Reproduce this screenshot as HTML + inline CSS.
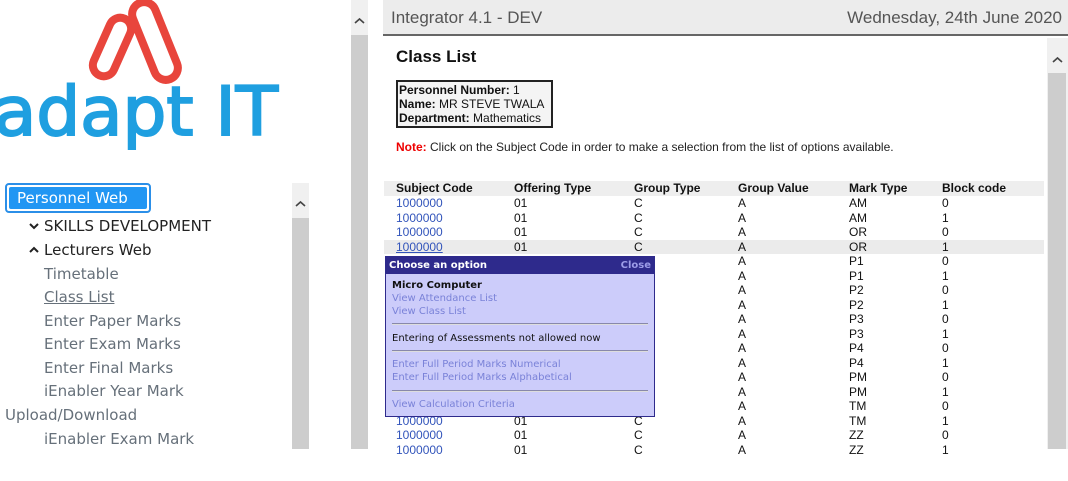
<!DOCTYPE html>
<html><head><meta charset="utf-8"><style>
*{margin:0;padding:0;box-sizing:border-box}
body{width:1068px;height:449px;overflow:hidden;background:#fff;position:relative;font-family:"Liberation Sans",Arial,sans-serif}
.a{position:absolute}
.side{font-family:"DejaVu Sans","Liberation Sans",sans-serif;font-size:15px;color:#66707a;white-space:nowrap}
.r{position:absolute;left:0;width:660px;height:14.5px;font-size:12px;line-height:14px;color:#111}
.r span{position:absolute}
.r .c0{left:12px;color:#3355bb}
.r .c1{left:130px}.r .c2{left:250px}.r .c3{left:354px}.r .c4{left:465px}.r .c5{left:558px}
.pm{font-family:"DejaVu Sans",Verdana,sans-serif;font-size:10px;position:absolute;left:7px;white-space:nowrap}
.lk{color:#7a82d8}
.hr{position:absolute;left:6px;width:256px;height:2px;background:#8888aa;border-bottom:1px solid #ddd}
</style></head><body>
<!-- logo -->
<svg class="a" style="left:0;top:0" width="300" height="150">
<rect x="101" y="16" width="22" height="62" rx="11" fill="none" stroke="#e8453c" stroke-width="8" transform="rotate(24 112 47)"/>
<rect x="143" y="0" width="24" height="82" rx="12" fill="none" stroke="#e8453c" stroke-width="8" transform="rotate(-22 155 41)"/>
<text x="-6" y="135" font-family="DejaVu Sans,sans-serif" font-size="68" fill="#1f9fe0" stroke="#1f9fe0" stroke-width="2" textLength="284" lengthAdjust="spacingAndGlyphs">adapt IT</text>
</svg>
<!-- sidebar -->
<div class="a" style="left:5px;top:183px;width:146px;height:30px;border:2px solid #2b8fe8;border-radius:4px;background:#fff"></div>
<div class="a" style="left:8px;top:186px;width:140px;height:24px;background:#2196f3;border:1px solid #fff;border-radius:3px;color:#fff;font-family:'DejaVu Sans',sans-serif;font-size:15px;line-height:22px;padding-left:8px">Personnel Web</div>
<svg class="a" style="left:29px;top:222px" width="10" height="8"><path d="M1 2 L5 6 L9 2" fill="none" stroke="#222" stroke-width="2"/></svg>
<svg class="a" style="left:29px;top:246px" width="10" height="8"><path d="M1 6 L5 2 L9 6" fill="none" stroke="#222" stroke-width="2"/></svg>
<div class="a side" style="left:44px;top:217px;color:#222">SKILLS DEVELOPMENT</div>
<div class="a side" style="left:44px;top:241px;color:#222">Lecturers Web</div>
<div class="a side" style="left:44px;top:265px">Timetable</div>
<div class="a side" style="left:44px;top:288px;text-decoration:underline">Class List</div>
<div class="a side" style="left:44px;top:312px">Enter Paper Marks</div>
<div class="a side" style="left:44px;top:335px">Enter Exam Marks</div>
<div class="a side" style="left:44px;top:359px">Enter Final Marks</div>
<div class="a side" style="left:44px;top:382px">iEnabler Year Mark</div>
<div class="a side" style="left:5px;top:406px">Upload/Download</div>
<div class="a side" style="left:44px;top:430px">iEnabler Exam Mark</div>
<!-- inner scrollbar -->
<div class="a" style="left:292px;top:183px;width:17px;height:266px;background:#f0f0f0"></div>
<div class="a" style="left:292px;top:218px;width:17px;height:231px;background:#cdcdcd"></div>
<svg class="a" style="left:295px;top:200px" width="11" height="8"><path d="M1 6 L5.5 2 L10 6" fill="none" stroke="#444" stroke-width="1.6"/></svg>
<!-- outer scrollbar -->
<div class="a" style="left:351px;top:0;width:17px;height:449px;background:#f0f0f0"></div>
<div class="a" style="left:351px;top:35px;width:17px;height:414px;background:#cdcdcd"></div>
<svg class="a" style="left:354px;top:17px" width="11" height="8"><path d="M1 6 L5.5 2 L10 6" fill="none" stroke="#444" stroke-width="1.6"/></svg>
<!-- header -->
<div class="a" style="left:383px;top:0;width:685px;height:36px;background:#ececec;border-bottom:2px solid #666"></div>
<div class="a" style="left:391px;top:8px;font-family:'Liberation Sans',sans-serif;font-size:17px;color:#555">Integrator 4.1 - DEV</div>
<div class="a" style="right:6px;top:8px;font-family:'Liberation Sans',sans-serif;font-size:17px;color:#555">Wednesday, 24th June 2020</div>
<!-- right scrollbar -->
<div class="a" style="left:1047px;top:38px;width:21px;height:411px;background:#f0f0f0"></div>
<div class="a" style="left:1048px;top:73px;width:18px;height:376px;background:#cdcdcd"></div>
<svg class="a" style="left:1052px;top:56px" width="11" height="8"><path d="M1 6 L5.5 2 L10 6" fill="none" stroke="#444" stroke-width="1.6"/></svg>
<!-- content -->
<div class="a" style="left:396px;top:47px;font-size:17px;font-weight:bold;color:#111">Class List</div>
<div class="a" style="left:396px;top:80px;border:2px solid #222;padding:1px 1px;font-size:12px;line-height:14px;color:#111;background:#f4f4f4;width:157px">
<b>Personnel Number:</b> 1<br><b>Name:</b> MR STEVE TWALA<br><b>Department:</b> Mathematics</div>
<div class="a" style="left:396px;top:140px;font-size:12px;color:#222"><b style="color:#e00">Note:</b> Click on the Subject Code in order to make a selection from the list of options available.</div>
<div class="a" style="left:384px;top:181px;width:660px;height:300px">
<div class="r" style="top:0;background:#eee;font-weight:bold;height:15px"><span class="c0" style="color:#111">Subject Code</span><span class="c1">Offering Type</span><span class="c2">Group Type</span><span class="c3">Group Value</span><span class="c4">Mark Type</span><span class="c5">Block code</span></div>
<div class="r" style="top:15px"><span class="c0">1000000</span><span class="c1">01</span><span class="c2">C</span><span class="c3">A</span><span class="c4">AM</span><span class="c5">0</span></div>
<div class="r" style="top:29.5px"><span class="c0">1000000</span><span class="c1">01</span><span class="c2">C</span><span class="c3">A</span><span class="c4">AM</span><span class="c5">1</span></div>
<div class="r" style="top:44px"><span class="c0">1000000</span><span class="c1">01</span><span class="c2">C</span><span class="c3">A</span><span class="c4">OR</span><span class="c5">0</span></div>
<div class="r" style="top:58.5px;background:#ebebeb"><span class="c0" style="text-decoration:underline">1000000</span><span class="c1">01</span><span class="c2">C</span><span class="c3">A</span><span class="c4">OR</span><span class="c5">1</span></div>
<div class="r" style="top:73px"><span class="c3">A</span><span class="c4">P1</span><span class="c5">0</span></div>
<div class="r" style="top:87.5px"><span class="c3">A</span><span class="c4">P1</span><span class="c5">1</span></div>
<div class="r" style="top:102px"><span class="c3">A</span><span class="c4">P2</span><span class="c5">0</span></div>
<div class="r" style="top:116.5px"><span class="c3">A</span><span class="c4">P2</span><span class="c5">1</span></div>
<div class="r" style="top:131px"><span class="c3">A</span><span class="c4">P3</span><span class="c5">0</span></div>
<div class="r" style="top:145.5px"><span class="c3">A</span><span class="c4">P3</span><span class="c5">1</span></div>
<div class="r" style="top:160px"><span class="c3">A</span><span class="c4">P4</span><span class="c5">0</span></div>
<div class="r" style="top:174.5px"><span class="c3">A</span><span class="c4">P4</span><span class="c5">1</span></div>
<div class="r" style="top:189px"><span class="c3">A</span><span class="c4">PM</span><span class="c5">0</span></div>
<div class="r" style="top:203.5px"><span class="c3">A</span><span class="c4">PM</span><span class="c5">1</span></div>
<div class="r" style="top:218px"><span class="c3">A</span><span class="c4">TM</span><span class="c5">0</span></div>
<div class="r" style="top:232.5px"><span class="c0">1000000</span><span class="c1">01</span><span class="c2">C</span><span class="c3">A</span><span class="c4">TM</span><span class="c5">1</span></div>
<div class="r" style="top:247px"><span class="c0">1000000</span><span class="c1">01</span><span class="c2">C</span><span class="c3">A</span><span class="c4">ZZ</span><span class="c5">0</span></div>
<div class="r" style="top:261.5px"><span class="c0">1000000</span><span class="c1">01</span><span class="c2">C</span><span class="c3">A</span><span class="c4">ZZ</span><span class="c5">1</span></div>
</div>
<!-- popup -->
<div class="a" style="left:385px;top:256px;width:270px;height:161px;background:#ccccfa;border:1px solid #2e2a8c">
<div style="height:17px;background:#2e2a8c;position:relative"><span class="pm" style="left:3px;top:3px;color:#fff;font-weight:bold">Choose an option</span><span class="pm" style="left:auto;right:3px;top:3px;color:#9c9ce8;font-weight:bold">Close</span></div>
<span class="pm" style="top:23px;left:6px;font-weight:bold;color:#111">Micro Computer</span>
<span class="pm lk" style="top:36px;left:6px">View Attendance List</span>
<span class="pm lk" style="top:49px;left:6px">View Class List</span>
<div class="hr" style="top:66px"></div>
<span class="pm" style="top:76px;left:6px;color:#111">Entering of Assessments not allowed now</span>
<div class="hr" style="top:93px"></div>
<span class="pm lk" style="top:102px;left:6px">Enter Full Period Marks Numerical</span>
<span class="pm lk" style="top:115px;left:6px">Enter Full Period Marks Alphabetical</span>
<div class="hr" style="top:133px"></div>
<span class="pm lk" style="top:142px;left:6px">View Calculation Criteria</span>
</div>
</body></html>
